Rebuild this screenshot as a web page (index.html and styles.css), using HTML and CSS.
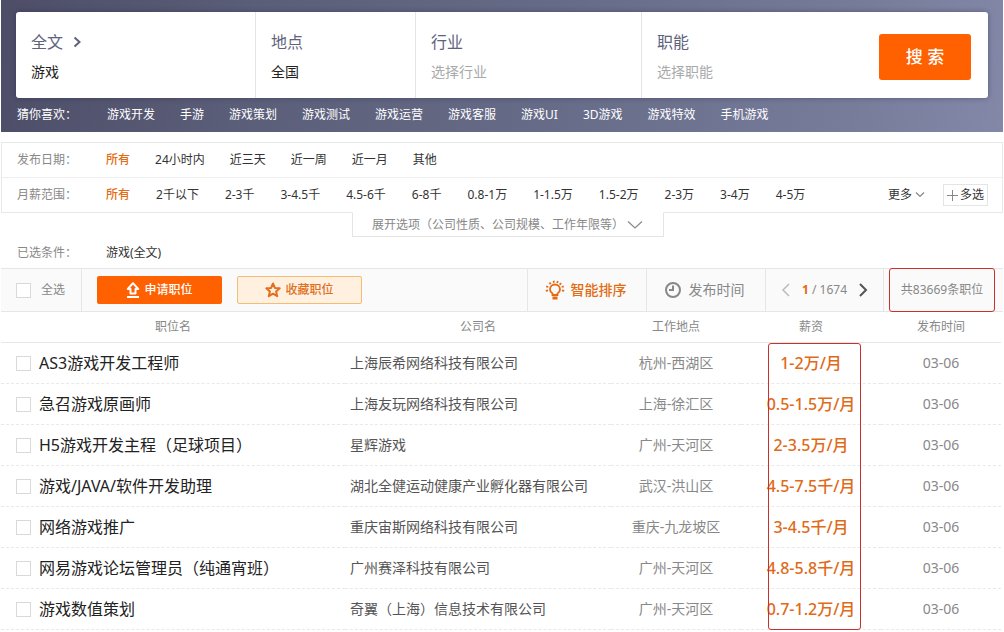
FILE: index.html
```html
<!DOCTYPE html>
<html lang="zh-CN">
<head>
<meta charset="utf-8">
<meta name="viewport" content="width=device-width, initial-scale=1">
<title>职位搜索</title>
<link rel="stylesheet" href="styles.css">
</head>
<body>
<header class="hero">
  <form class="search">
    <div class="field">
      <button type="button" class="scope">全文 <svg width="9" height="12" viewBox="0 0 9 12"><path d="M1.500 1.500L6.500 6L1.500 10.500" fill="none" stroke="currentColor" stroke-width="2"/></svg></button>
      <input class="box" type="text" aria-label="关键字" value="游戏">
    </div>
    <div class="field">
      <label class="caption" for="place">地点</label>
      <input class="box" id="place" type="text" value="全国">
    </div>
    <div class="field">
      <label class="caption" for="industry">行业</label>
      <input class="box" id="industry" type="text" placeholder="选择行业">
    </div>
    <div class="field field-last">
      <label class="caption" for="job">职能</label>
      <input class="box" id="job" type="text" placeholder="选择职能">
    </div>
    <div class="submit-cell"><button type="submit" class="submit">搜 索</button></div>
  </form>
  <nav class="guess">
    <span class="label">猜你喜欢：</span>
    <a href="#">游戏开发</a><a href="#">手游</a><a href="#">游戏策划</a><a href="#">游戏测试</a><a href="#">游戏运营</a><a href="#">游戏客服</a><a href="#">游戏UI</a><a href="#">3D游戏</a><a href="#">游戏特效</a><a href="#">手机游戏</a>
  </nav>
</header>

<main>
  <section class="filters">
    <div class="filter-row">
      <span class="label">发布日期：</span>
      <a class="on" href="#">所有</a><a href="#">24小时内</a><a href="#">近三天</a><a href="#">近一周</a><a href="#">近一月</a><a href="#">其他</a>
    </div>
    <div class="filter-row salary-row">
      <span class="label">月薪范围：</span>
      <a class="on" href="#">所有</a><a href="#">2千以下</a><a href="#">2-3千</a><a href="#">3-4.5千</a><a href="#">4.5-6千</a><a href="#">6-8千</a><a href="#">0.8-1万</a><a href="#">1-1.5万</a><a href="#">1.5-2万</a><a href="#">2-3万</a><a href="#">3-4万</a><a href="#">4-5万</a>
      <div class="row-tools">
        <button type="button" class="more">更多<svg width="10" height="6" viewBox="0 0 10 6"><path d="M1 .5L5 4.500L9 .5" fill="none" stroke="#888" stroke-width="1.200"/></svg></button>
        <button type="button" class="multi"><svg width="11" height="11" viewBox="0 0 11 11"><path d="M5.500 0V11M0 5.500H11" stroke="#888"/></svg>多选</button>
      </div>
    </div>
  </section>
  <div class="expand-wrap">
    <button type="button" class="expand">展开选项（公司性质、公司规模、工作年限等）<svg width="16" height="8" viewBox="0 0 16 8"><path d="M1 .5L8 7L15 .5" fill="none" stroke="#888" stroke-width="1.200"/></svg></button>
  </div>
  <div class="chosen"><span class="label">已选条件：</span><a href="#">游戏(全文)</a></div>

  <div class="toolbar">
    <label class="all"><input type="checkbox" class="tick">全选</label>
    <div class="actions">
      <button type="button" class="act apply"><svg width="14" height="16" viewBox="0 0 14 16"><path d="M7 1.200L12.200 7H9.500V11.500H4.500V7H1.800Z" fill="none" stroke="#fff" stroke-width="2" stroke-linejoin="round"/><path d="M1 15H13" stroke="#fff" stroke-width="2"/></svg>申请职位</button>
      <button type="button" class="act save"><svg width="16" height="16" viewBox="0 0 16 16"><path d="M8 1.500L9.900 5.900L14.700 6.300L11.100 9.500L12.200 14.200L8 11.700L3.800 14.200L4.900 9.500L1.300 6.300L6.100 5.900Z" fill="none" stroke="#e0701e" stroke-width="2" stroke-linejoin="round"/></svg>收藏职位</button>
    </div>
    <button type="button" class="sort smart"><svg width="20" height="20" viewBox="0 0 20 20"><g fill="none" stroke="#e36c12" stroke-width="1.800"><path d="M7.500 15V13.500Q5 12 5 9.500A5 5 0 0 1 15 9.500Q15 12 12.500 13.500V15Z"/><path d="M7.500 18H12.500" stroke-width="3"/><path d="M9 2.800L8.600 .8M12.200 2.900L12.800 1M5.800 4.200L4.400 2.700M14.600 4.600L16.200 3.200M3.300 7L1.200 6.400M16.700 7L18.800 6.400M3.100 10.300L.8 10.800M16.900 10.300L19.200 10.800"/></g></svg>智能排序</button>
    <button type="button" class="sort"><svg width="16" height="16" viewBox="0 0 16 16"><circle cx="8" cy="8" r="7" fill="none" stroke="#888" stroke-width="2"/><path d="M8 3.500V8H4" fill="none" stroke="#888" stroke-width="2"/></svg>发布时间</button>
    <div class="pager">
      <button type="button" aria-label="上一页"><svg width="9" height="14" viewBox="0 0 9 14"><path d="M8 1L2 7L8 13" fill="none" stroke="#bbb" stroke-width="1.500"/></svg></button>
      <span><b>1</b> / 1674</span>
      <button type="button" aria-label="下一页"><svg width="9" height="14" viewBox="0 0 9 14"><path d="M1 1L7 7L1 13" fill="none" stroke="#555" stroke-width="2"/></svg></button>
    </div>
    <div class="total">共83669条职位</div>
  </div>

  <div class="results">
    <table>
      <colgroup><col class="c-name"><col class="c-firm"><col class="c-city"><col class="c-pay"><col class="c-date"></colgroup>
      <thead><tr><th>职位名</th><th>公司名</th><th>工作地点</th><th>薪资</th><th>发布时间</th></tr></thead>
      <tbody>
        <tr><td class="name"><label><input type="checkbox" class="tick">AS3游戏开发工程师</label></td><td class="firm">上海辰希网络科技有限公司</td><td>杭州-西湖区</td><td class="pay">1-2万/月</td><td>03-06</td></tr>
        <tr><td class="name"><label><input type="checkbox" class="tick">急召游戏原画师</label></td><td class="firm">上海友玩网络科技有限公司</td><td>上海-徐汇区</td><td class="pay">0.5-1.5万/月</td><td>03-06</td></tr>
        <tr><td class="name"><label><input type="checkbox" class="tick">H5游戏开发主程（足球项目）</label></td><td class="firm">星辉游戏</td><td>广州-天河区</td><td class="pay">2-3.5万/月</td><td>03-06</td></tr>
        <tr><td class="name"><label><input type="checkbox" class="tick">游戏/JAVA/软件开发助理</label></td><td class="firm">湖北全健运动健康产业孵化器有限公司</td><td>武汉-洪山区</td><td class="pay">4.5-7.5千/月</td><td>03-06</td></tr>
        <tr><td class="name"><label><input type="checkbox" class="tick">网络游戏推广</label></td><td class="firm">重庆宙斯网络科技有限公司</td><td>重庆-九龙坡区</td><td class="pay">3-4.5千/月</td><td>03-06</td></tr>
        <tr><td class="name"><label><input type="checkbox" class="tick">网易游戏论坛管理员（纯通宵班）</label></td><td class="firm">广州赛泽科技有限公司</td><td>广州-天河区</td><td class="pay">4.8-5.8千/月</td><td>03-06</td></tr>
        <tr><td class="name"><label><input type="checkbox" class="tick">游戏数值策划</label></td><td class="firm">奇翼（上海）信息技术有限公司</td><td>广州-天河区</td><td class="pay">0.7-1.2万/月</td><td>03-06</td></tr>
      </tbody>
    </table>
    <div class="pay-mark"></div>
  </div>
</main>
</body>
</html>
```
FILE: styles.css
```css
* { box-sizing: border-box; }

body {
  margin: 0 1px;
  background: #fff;
  color: #333;
  font: 12px/18px "Noto Sans", "Noto Sans CJK SC", sans-serif;
}

a { color: inherit; text-decoration: none; }

button, input {
  margin: 0;
  padding: 0;
  border: 0;
  background: none;
  color: inherit;
  font: inherit;
}

svg { display: block; flex: none; }

/* Search header */
.hero {
  padding: 12px 15px 8px;
  background: linear-gradient(100deg, #4d4d68 0%, #5b5e78 25%, #666b87 55%, #777c9b 85%, #8388a8 100%);
}

.search {
  display: grid;
  grid-template-columns: 240fr 160fr 226fr 222fr 124fr;
  height: 86px;
  border-radius: 3px;
  background: #fff;
  box-shadow: 0 0 5px rgba(30, 30, 60, 0.4);
}

.field {
  display: flex;
  flex-direction: column;
  align-items: flex-start;
  gap: 8px;
  min-width: 0;
  padding: 18px 14px 0 15px;
  border-right: 1px solid #e4e4e8;
}

.field-last { border-right: 0; }

.scope, .caption {
  display: flex;
  align-items: center;
  gap: 10px;
  color: #5e637c;
  font-size: 16px;
  line-height: 24px;
}

.box {
  width: 100%;
  height: 20px;
  color: #222;
  font-size: 14px;
  line-height: 20px;
}

.box::placeholder { color: #aaa; opacity: 1; }

.submit-cell { padding: 22px 17px 0 15px; }

.submit {
  width: 100%;
  height: 46px;
  border-radius: 3px;
  background: #ff6000;
  color: #fff;
  font-size: 17px;
  font-weight: 500;
}

.guess {
  display: flex;
  gap: 25px;
  padding-top: 8px;
  color: #fff;
}

.guess .label { width: 66px; padding-left: 1px; }

/* Filters */
.filters {
  margin-top: 10px;
  border: 1px solid #e8e8e8;
}

.filter-row {
  display: flex;
  align-items: center;
  gap: 25px;
  height: 34px;
  padding: 0 14px 0 15px;
}

.label { flex: none; }

.filter-row .label { width: 64px; color: #888; }

.salary-row {
  gap: 26px;
  height: 35px;
  border-top: 1px solid #eee;
}

.salary-row .label { width: 63px; }

.on { color: #e36c12; font-weight: 500; }

.row-tools {
  display: flex;
  align-items: center;
  gap: 18px;
  margin-left: auto;
}

.more { display: flex; align-items: center; gap: 3px; }

.multi {
  display: flex;
  align-items: center;
  gap: 2px;
  height: 22px;
  padding: 0 3px;
  border: 1px solid #e4e4e4;
}

.expand-wrap {
  display: flex;
  justify-content: center;
  margin-top: -1px;
  padding-left: 12px;
}

.expand {
  display: flex;
  align-items: center;
  gap: 3px;
  height: 25px;
  padding: 0 20px 0 19px;
  border: 1px solid #e4e4e4;
  border-top-color: #fff;
  background: #fff;
  color: #888;
}

.chosen {
  display: flex;
  height: 31px;
  padding: 7px 16px 0;
}

.chosen .label { width: 89px; color: #888; }

/* Toolbar */
.toolbar {
  display: flex;
  height: 44px;
  border-top: 1px solid #e6e6e6;
  border-bottom: 1px solid #e6e6e6;
  background: #fafafa;
  color: #888;
}

.tick {
  flex: none;
  width: 15px;
  height: 15px;
  border: 1px solid #d9d9d9;
  background: #fff;
  appearance: none;
}

.all {
  display: flex;
  align-items: center;
  gap: 10px;
  width: 81px;
  padding-left: 15px;
  border-right: 1px solid #e6e6e6;
}

.actions {
  display: flex;
  flex: 1;
  align-items: center;
  gap: 15px;
  padding-left: 15px;
}

.act {
  display: flex;
  align-items: center;
  justify-content: center;
  gap: 4px;
  width: 125px;
  height: 28px;
  border-radius: 2px;
  font-weight: 500;
}

.apply { background: #ff6000; color: #fff; }

.save { border: 1px solid #f3bd72; background: #fff0e0; color: #e0701e; }

.sort {
  display: flex;
  align-items: center;
  justify-content: center;
  gap: 8px;
  width: 119px;
  padding-right: 3px;
  border-left: 1px solid #e6e6e6;
  font-size: 14px;
}

.smart { gap: 6px; color: #e36c12; font-weight: 500; }

.pager {
  display: flex;
  align-items: center;
  justify-content: center;
  gap: 12px;
  width: 119px;
  border: solid #e6e6e6;
  border-width: 0 1px;
}

.pager b { color: #e36c12; }

.total {
  display: flex;
  align-items: center;
  justify-content: center;
  width: 106px;
  margin: -1px 8px -1px 5px;
  border: 1px solid #c9302c;
  border-radius: 3px;
}

/* Results */
.results { position: relative; margin-right: 2px; }

table {
  width: 100%;
  border-collapse: separate;
  border-spacing: 0;
  table-layout: fixed;
  color: #888;
  font-size: 14px;
  text-align: center;
}

.c-name { width: 34.4%; }
.c-firm { width: 26.6%; }
.c-city { width: 13%; }
.c-pay { width: 14%; }
.c-date { width: 12%; }

th {
  height: 31px;
  padding: 0;
  border-bottom: 1px solid #e6e6e6;
  font-size: 12px;
  font-weight: 400;
}

td {
  height: 41px;
  padding: 0;
  border-bottom: 1px dashed #e9e9e9;
  white-space: nowrap;
}

td.name { padding-left: 15px; color: #222; font-size: 16px; text-align: left; }

.name label { display: flex; align-items: center; gap: 8px; }

td.firm { padding-left: 5px; color: #555; text-align: left; }

.pay { color: #e06a17; font-size: 16px; font-weight: 500; }

/* Outline drawn over the salary column */
.pay-mark {
  position: absolute;
  top: 31px;
  bottom: 0;
  left: 76.7%;
  width: 93px;
  border: 1px solid #c9302c;
  border-radius: 3px;
  pointer-events: none;
}
```
